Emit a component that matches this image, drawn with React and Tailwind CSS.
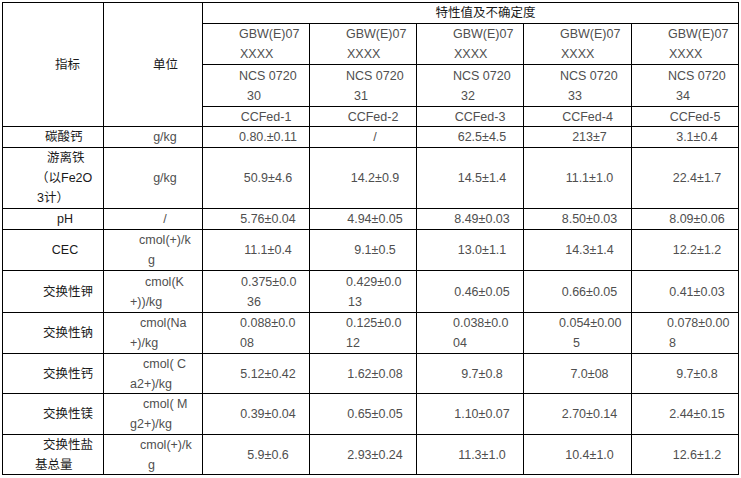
import React from 'react';

// a cell is either a string (centred) or a list of [text, padding class] lines
const header = {
  gbw: ['GBW(E)07', 'XXXX'],
  ncs: ['30', '31', '32', '33', '34'],
  ccfed: ['CCFed-1', 'CCFed-2', 'CCFed-3', 'CCFed-4', 'CCFed-5'],
};

const rows = [
  [
    [['碳酸钙', 'pl-[42px]']],
    'g/kg',
    '0.80.±0.11', '/', '62.5±4.5', '213±7', '3.1±0.4',
  ],
  [
    [['游离铁', 'pl-[44px]'], ['（以Fe2O', 'pl-[33px]'], ['3计）', 'pl-[34px]']],
    'g/kg',
    '50.9±4.6', '14.2±0.9', '14.5±1.4', '11.1±1.0', '22.4±1.7',
  ],
  ['pH', '/', '5.76±0.04', '4.94±0.05', '8.49±0.03', '8.50±0.03', '8.09±0.06'],
  [
    'CEC',
    [['cmol(+)/k', 'pl-[35px]'], ['g', 'pl-[44px]']],
    '11.1±0.4', '9.1±0.5', '13.0±1.1', '14.3±1.4', '12.2±1.2',
  ],
  [
    [['交换性钾', 'pl-[40px]']],
    [['cmol(K', 'pl-[41px]'], ['+))/kg', 'pl-[26px]']],
    [['0.375±0.0', 'pl-[38px]'], ['36', 'pl-[44px]']],
    [['0.429±0.0', 'pl-[36px]'], ['13', 'pl-[38px]']],
    '0.46±0.05', '0.66±0.05', '0.41±0.03',
  ],
  [
    [['交换性钠', 'pl-[40px]']],
    [['cmol(Na', 'pl-[36px]'], ['+)/kg', 'pl-[26px]']],
    [['0.088±0.0', 'pl-[37px]'], ['08', 'pl-[37px]']],
    [['0.125±0.0', 'pl-[36px]'], ['12', 'pl-[36px]']],
    [['0.038±0.0', 'pl-[36px]'], ['04', 'pl-[36px]']],
    [['0.054±0.00', 'pl-[35px]'], ['5', 'pl-[49px]']],
    [['0.078±0.00', 'pl-[35px]'], ['8', 'pl-[37px]']],
  ],
  [
    [['交换性钙', 'pl-[40px]']],
    [['cmol( C', 'pl-[39px]'], ['a2+)/kg', 'pl-[26px]']],
    '5.12±0.42', '1.62±0.08', '9.7±0.8', '7.0±08', '9.7±0.8',
  ],
  [
    [['交换性镁', 'pl-[40px]']],
    [['cmol( M', 'pl-[39px]'], ['g2+)/kg', 'pl-[26px]']],
    '0.39±0.04', '0.65±0.05', '1.10±0.07', '2.70±0.14', '2.44±0.15',
  ],
  [
    [['交换性盐', 'pl-[40px]'], ['基总量', 'pl-[32px]']],
    [['cmol(+)/k', 'pl-[36px]'], ['g', 'pl-[44px]']],
    '5.9±0.6', '2.93±0.24', '11.3±1.0', '10.4±1.0', '12.6±1.2',
  ],
];

function Cell({ value, className = '' }) {
  const base = 'border-r border-b border-black flex flex-col justify-center ' + className;
  if (typeof value === 'string') {
    return <div className={base + ' text-center pl-6 whitespace-nowrap'}>{value}</div>;
  }
  return (
    <div className={base + ' whitespace-nowrap'}>
      {value.map(([text, pad], i) => (
        <div key={i} className={pad}>{text}</div>
      ))}
    </div>
  );
}

export default function App() {
  return (
    <div className="w-[741px] h-[478px] bg-white pt-[2px] pl-[2px] overflow-hidden">
      <div
        className="grid w-fit border-l border-t border-black text-[12.5px] leading-[20px] text-[#4f4f4f] grid-cols-[101px_99px_107px_107px_107px_108px_107px] grid-rows-[21px_41px_42px_20px_21px_61px_21px_41px_42px_41px_40px_41px_40px]"
        style={{ fontFamily: '"Liberation Sans", "Noto Sans CJK SC", sans-serif' }}
      >
        <div className="row-span-4 border-r border-b border-black flex items-center justify-center pl-[29px] text-[#1a1a1a]">指标</div>
        <div className="row-span-4 border-r border-b border-black flex items-center justify-center pl-[25px] text-[#1a1a1a]">单位</div>
        <div className="col-span-5 border-r border-b border-black flex items-center justify-center pl-[30px] text-[#1a1a1a]">特性值及不确定度</div>

        {header.ccfed.map((_, i) => (
          <Cell key={'g' + i} value={[[header.gbw[0], 'pl-[36px]'], [header.gbw[1], 'pl-[37px]']]} />
        ))}
        {header.ncs.map((n) => (
          <Cell key={'n' + n} value={[['NCS 0720', 'pl-[36px]'], [n, 'pl-[44px]']]} />
        ))}
        {header.ccfed.map((c) => (
          <div key={c} className="border-r border-b border-black flex items-center justify-center pl-5">{c}</div>
        ))}

        {rows.map((row, r) =>
          row.map((cell, c) => (
            <Cell key={r + '-' + c} value={cell} className={c === 0 ? 'text-[#1a1a1a]' : ''} />
          ))
        )}
      </div>
    </div>
  );
}
